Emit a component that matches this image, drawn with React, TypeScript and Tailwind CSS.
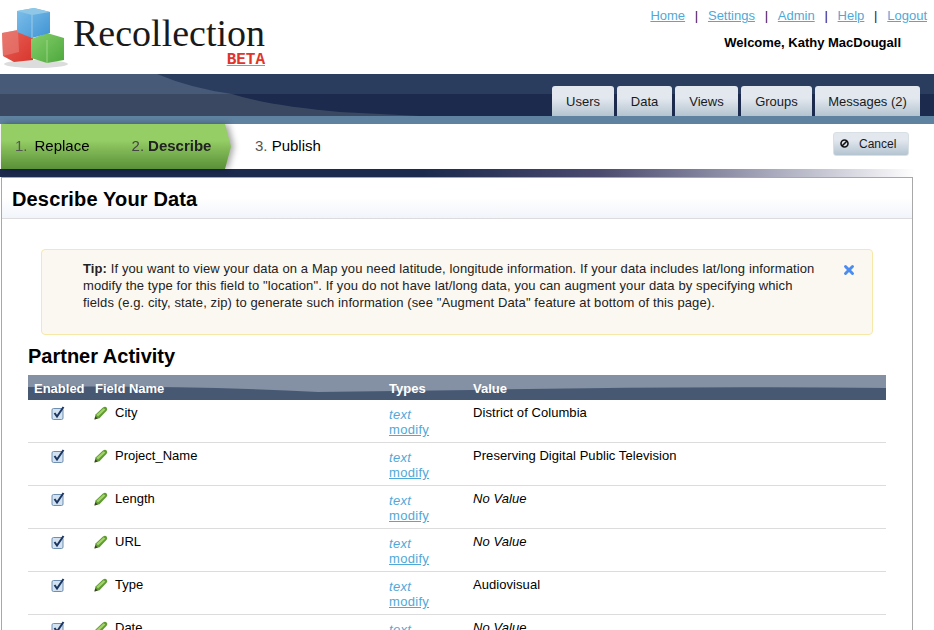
import { X } from "lucide-react";

const font = { fontFamily: '"Liberation Sans", Arial, sans-serif' };

const topLinks = ["Home", "Settings", "Admin", "Help", "Logout"];
const tabs = [
  { label: "Users", width: "w-[62px]" },
  { label: "Data", width: "w-[55px]" },
  { label: "Views", width: "w-[63px]" },
  { label: "Groups", width: "w-[71px]" },
  { label: "Messages (2)", width: "w-[105px]" },
];
const fields = [
  { name: "City", value: "District of Columbia" },
  { name: "Project_Name", value: "Preserving Digital Public Television" },
  { name: "Length", value: "" },
  { name: "URL", value: "" },
  { name: "Type", value: "Audiovisual" },
  { name: "Date", value: "" },
];

const Logo = () => (
  <svg width="70" height="70" viewBox="0 0 70 70" className="shrink-0">
    <defs>
      <linearGradient id="blue" x1="0" y1="0" x2="1" y2="1">
        <stop offset="0" stopColor="#7fc0ea" />
        <stop offset="1" stopColor="#3f93d4" />
      </linearGradient>
      <linearGradient id="red" x1="0" y1="0" x2="1" y2="1">
        <stop offset="0" stopColor="#e8645a" />
        <stop offset="1" stopColor="#d8352c" />
      </linearGradient>
      <linearGradient id="green" x1="0" y1="0" x2="1" y2="1">
        <stop offset="0" stopColor="#86cf6c" />
        <stop offset="1" stopColor="#4da83c" />
      </linearGradient>
    </defs>
    <ellipse cx="36" cy="64" rx="32" ry="4" fill="#dcdcdc" />
    <path d="M2 33 L18 30 L33 37 L33 60 L14 62 L3 56 Z" fill="url(#red)" />
    <path d="M2 33 L18 30 L19 52 L3 56 Z" fill="#e8877f" opacity="0.55" />
    <path d="M31 39 L47 33 L64 38 L64 60 L47 63 L31 58 Z" fill="url(#green)" />
    <path d="M47 40 L47 63" stroke="#a8dc92" strokeWidth="0.8" />
    <path d="M17 11 L34 8 L50 12 L50 33 L32 38 L17 32 Z" fill="url(#blue)" />
    <path d="M17 11 L34 8 L50 12 L32 15 Z" fill="#8fc8e6" />
    <path d="M32 15 L32 38" stroke="#a9d6ef" strokeWidth="0.8" />
  </svg>
);

const Check = () => (
  <svg width="14" height="15" viewBox="0 0 14 15">
    <rect x="1" y="2.5" width="11" height="11" rx="1.5" fill="#d3e2f1" stroke="#6f8fb0" />
    <path d="M3.5 7 L6 10.5 L12.5 1" fill="none" stroke="#1c3660" strokeWidth="2" />
  </svg>
);

const Pencil = () => (
  <svg width="14" height="14" viewBox="0 0 14 14" className="-ml-px mt-[1px]">
    <path d="M0.5 13.5 L1.5 8.5 L9 1.5 Q11 0 12.6 1.4 Q14 3 12.6 4.8 L5.5 12.2 Z" fill="#5f9a32" />
    <path d="M2.4 8.8 L9.6 2.2 L11.4 3.6 L4 10.6 Z" fill="#a4d36b" />
    <path d="M0.5 13.5 L1.2 10.2 L3.8 12.6 Z" fill="#3d3d2a" />
  </svg>
);

const Row = ({ name, value }: { name: string; value: string }) => (
  <div className="grid grid-cols-[67px_294px_84px_1fr] h-[43px] border-b border-[#dcdcdc] text-[13px] leading-[15px] text-black pt-[5px]">
    <div className="flex justify-center pr-[7px] pt-px">
      <Check />
    </div>
    <div className="flex gap-[7px]">
      <Pencil />
      <span>{name}</span>
    </div>
    <div className="pt-[2px] tracking-[0.3px] text-[#4fa9d8]">
      <div className="italic">text</div>
      <a className="underline">modify</a>
    </div>
    <div className="tracking-[0.06px]">{value || <em>No Value</em>}</div>
  </div>
);

export default function App() {
  return (
    <div className="h-[630px] w-[934px] overflow-hidden bg-white" style={font}>
      {/* Header */}
      <div className="flex h-[74px] justify-between">
        <div className="flex">
          <Logo />
          <div className="ml-[3px] flex flex-col pt-[11px]">
            <span className="text-[38px] leading-[44px] text-[#1a1a1a]" style={{ fontFamily: '"Liberation Serif", serif' }}>
              Recollection
            </span>
            <span
              className="self-end text-[16px] font-bold leading-[10px] text-[#e0352b] underline decoration-[#4fb0dc]"
              style={{ fontFamily: '"Liberation Mono", monospace' }}
            >
              BETA
            </span>
          </div>
        </div>
        <div className="flex flex-col items-end pr-[7px] pt-[8px] text-[13px] leading-[15px]">
          <div className="flex text-[#4fa9d8]">
            {topLinks.map((l, i) => (
              <span key={l} className="flex">
                {i > 0 && <span className="mx-[9.75px] text-[#3a0f3a]">|</span>}
                <a className="underline">{l}</a>
              </span>
            ))}
          </div>
          <div className="mr-[26px] mt-[12px] text-[13px] font-bold text-black">Welcome, Kathy MacDougall</div>
        </div>
      </div>

      {/* Nav */}
      <div className="relative h-[50px] bg-[#5f82a0]">
        <div className="h-[20px] bg-[#475a78]" />
        <div className="h-[22px] bg-[#3a4862]" />
        <svg className="absolute left-0 top-0" width="934" height="42" viewBox="0 0 934 42">
          <path d="M157 0 Q190 14 232 20 L934 20 L934 0 Z" fill="#2a3d5e" />
          <path d="M232 20 Q270 32 340 38 L420 42 L934 42 L934 20 Z" fill="#1b2a4d" />
        </svg>
        <div className="absolute bottom-[8px] right-[14px] flex gap-[3px] text-[13px] text-[#1a1a1a]">
          {tabs.map((t) => (
            <div
              key={t.label}
              className={`flex h-[30px] items-center justify-center rounded-t-[3px] bg-gradient-to-b from-[#e3e8ef] from-40% to-[#b4c4d0] pt-[2px] ${t.width}`}
            >
              {t.label}
            </div>
          ))}
        </div>
      </div>

      {/* Steps */}
      <div className="flex h-[45px] items-center justify-between pr-[25px]">
        <div className="flex h-full items-center">
          <div className="ml-px drop-shadow-[3px_0_3px_rgba(0,0,0,0.35)] h-full">
            <div className="flex h-full w-[230px] items-center bg-gradient-to-b from-[#96ce66] from-35% to-[#5a9038] [clip-path:polygon(0_0,224px_0,230px_50%,224px_100%,0_100%)] pl-[14px] text-[15px] text-black">
              <span className="text-[#555]">1.</span>
              <span className="ml-[7px]">Replace</span>
              <span className="ml-[42px] text-[#444]">2.</span>
              <span className="ml-[4px] font-bold text-[#222]">Describe</span>
            </div>
          </div>
          <div className="ml-[24px] text-[15px] text-black">
            <span className="text-[#555]">3.</span> Publish
          </div>
        </div>
        <div className="mb-[6px] flex h-[24px] w-[76px] items-center gap-[10px] rounded-[3px] border border-[#d8dfe5] bg-gradient-to-b from-[#e3e8ef] from-30% to-[#b4c4d0] pl-[6px] text-[12px] text-[#1a1a1a]">
          <svg width="9" height="9" viewBox="0 0 9 9">
            <circle cx="4.5" cy="4.5" r="3.5" fill="none" stroke="#111" strokeWidth="1.6" />
            <path d="M2 7 L7 2" stroke="#111" strokeWidth="1.6" />
          </svg>
          Cancel
        </div>
      </div>
      <div className="h-[8px] bg-gradient-to-r from-[#1b2a4d] from-45% via-[#4a4a6e] via-[64%] to-white to-[98%]" />

      {/* Card */}
      <div className="ml-px h-[460px] w-[912px] border-x border-t border-[#a8a8a8]">
        <div className="flex h-[41px] items-center border-b border-[#dcdcdc] bg-gradient-to-b from-white from-50% to-[#f1f5fa] pl-[10px] pt-px text-[20px] font-bold tracking-[0.15px] text-black">
          Describe Your Data
        </div>

        <div className="ml-[39px] mt-[30px] flex h-[86px] w-[832px] justify-between rounded-[4px] border border-[#f7e8a8] bg-[#fbf8f1] pl-[41px] pr-[16px] pt-[10px] text-[13px] leading-[17px] tracking-[0.11px] text-[#222]">
          <p className="w-[735px]">
            <b>Tip:</b> If you want to view your data on a Map you need latitude, longitude information. If your data
            includes lat/long information modify the type for this field to "location". If you do not have lat/long
            data, you can augment your data by specifying which fields (e.g. city, state, zip) to generate such
            information (see "Augment Data" feature at bottom of this page).
          </p>
          <X size={14} strokeWidth={5} className="mt-[3px] text-[#4a8cf0]" />
        </div>

        <h2 className="ml-[26px] mt-[9px] text-[20px] font-bold leading-[24px] text-black">Partner Activity</h2>

        <div className="ml-[26px] mt-[7px] w-[858px]">
          <div className="relative grid h-[25px] grid-cols-[67px_294px_84px_1fr] items-center bg-[#8490a3] pt-[2px] text-[13px] font-bold text-white">
            <svg className="absolute inset-0" width="858" height="25" viewBox="0 0 858 25">
              <path d="M0 12 Q150 10 290 17 L445 15 Q650 11 858 13 L858 25 L0 25 Z" fill="#475873" />
            </svg>
            <span className="relative pl-[6px]">Enabled</span>
            <span className="relative">Field Name</span>
            <span className="relative">Types</span>
            <span className="relative">Value</span>
          </div>
          {fields.map((f) => (
            <Row key={f.name} name={f.name} value={f.value} />
          ))}
        </div>
      </div>
    </div>
  );
}
